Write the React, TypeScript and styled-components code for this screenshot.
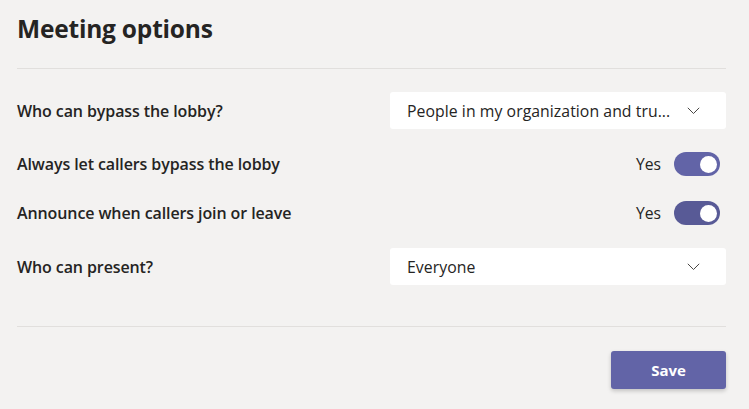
import React from "react";
import styled, { createGlobalStyle } from "styled-components";

const Global = createGlobalStyle`
  html, body { margin: 0; padding: 0; background: #f3f2f1; }
  body { font-family: "Open Sans", "Noto Sans", sans-serif; color: #252423; }
  * { box-sizing: border-box; }
`;

const Page = styled.div`
  width: 749px;
  height: 409px;
  padding: 0 23px 0 17px;
  display: flex;
  flex-direction: column;
`;

const Header = styled.div`
  height: 69px;
  display: flex;
  align-items: flex-start;
  padding-top: 12px;
  border-bottom: 1px solid #e1dfdd;
`;

const Title = styled.h1`
  margin: 0;
  font-size: 24.5px;
  font-weight: 700;
  line-height: 34px;
  letter-spacing: -0.2px;
  color: #252423;
`;

const Rows = styled.div`
  display: flex;
  flex-direction: column;
  gap: 21px;
  padding-top: 23px;
  padding-bottom: 41px;
  border-bottom: 1px solid #e1dfdd;
`;

const Row = styled.div<{ $h: number }>`
  display: flex;
  align-items: center;
  justify-content: space-between;
  height: ${(p) => p.$h}px;
`;

const Label = styled.div`
  font-size: 16px;
  font-weight: 600;
  letter-spacing: -0.1px;
  color: #252423;
`;

const Select = styled.div`
  width: 336px;
  height: 37px;
  background: #ffffff;
  border-radius: 3px;
  display: flex;
  align-items: center;
  padding: 0 26px 0 17px;
  gap: 12px;
`;

const SelectText = styled.span`
  flex: 1;
  font-size: 15.8px;
  color: #252423;
  white-space: nowrap;
  letter-spacing: 0.05px;
`;

const ToggleGroup = styled.div`
  display: flex;
  align-items: center;
  gap: 13px;
  padding-right: 6px;
`;

const ToggleLabel = styled.span`
  font-size: 15.7px;
  color: #252423;
`;

const Toggle = styled.div<{ $dark?: boolean }>`
  width: 46px;
  height: 24px;
  border-radius: 12px;
  background: ${(p) => (p.$dark ? "#585a96" : "#6264a7")};
  display: flex;
  align-items: center;
  justify-content: flex-end;
  padding-right: 3px;
`;

const Knob = styled.div`
  width: 17px;
  height: 17px;
  border-radius: 50%;
  background: #ffffff;
`;

const Footer = styled.div`
  display: flex;
  justify-content: flex-end;
  padding-top: 24px;
`;

const SaveButton = styled.button`
  width: 115px;
  height: 38px;
  border: none;
  border-radius: 3px;
  background: #6264a7;
  color: #ffffff;
  font-family: "Open Sans", "Noto Sans", sans-serif;
  font-size: 15px;
  font-weight: 700;
  box-shadow: 0 2px 4px rgba(0, 0, 0, 0.2);
`;

const Chevron = () => (
  <svg width="13" height="8" viewBox="0 0 13 8" fill="none">
    <path d="M0.8 0.8 L6.5 6.5 L12.2 0.8" stroke="#484644" strokeWidth="1" />
  </svg>
);

export default function App() {
  return (
    <Page>
      <Global />
      <Header>
        <Title>Meeting options</Title>
      </Header>
      <Rows>
        <Row $h={37}>
          <Label>Who can bypass the lobby?</Label>
          <Select>
            <SelectText>People in my organization and tru...</SelectText>
            <Chevron />
          </Select>
        </Row>
        <Row $h={28}>
          <Label>Always let callers bypass the lobby</Label>
          <ToggleGroup>
            <ToggleLabel>Yes</ToggleLabel>
            <Toggle>
              <Knob />
            </Toggle>
          </ToggleGroup>
        </Row>
        <Row $h={28}>
          <Label>Announce when callers join or leave</Label>
          <ToggleGroup>
            <ToggleLabel>Yes</ToggleLabel>
            <Toggle $dark>
              <Knob />
            </Toggle>
          </ToggleGroup>
        </Row>
        <Row $h={37}>
          <Label>Who can present?</Label>
          <Select>
            <SelectText>Everyone</SelectText>
            <Chevron />
          </Select>
        </Row>
      </Rows>
      <Footer>
        <SaveButton>Save</SaveButton>
      </Footer>
    </Page>
  );
}
